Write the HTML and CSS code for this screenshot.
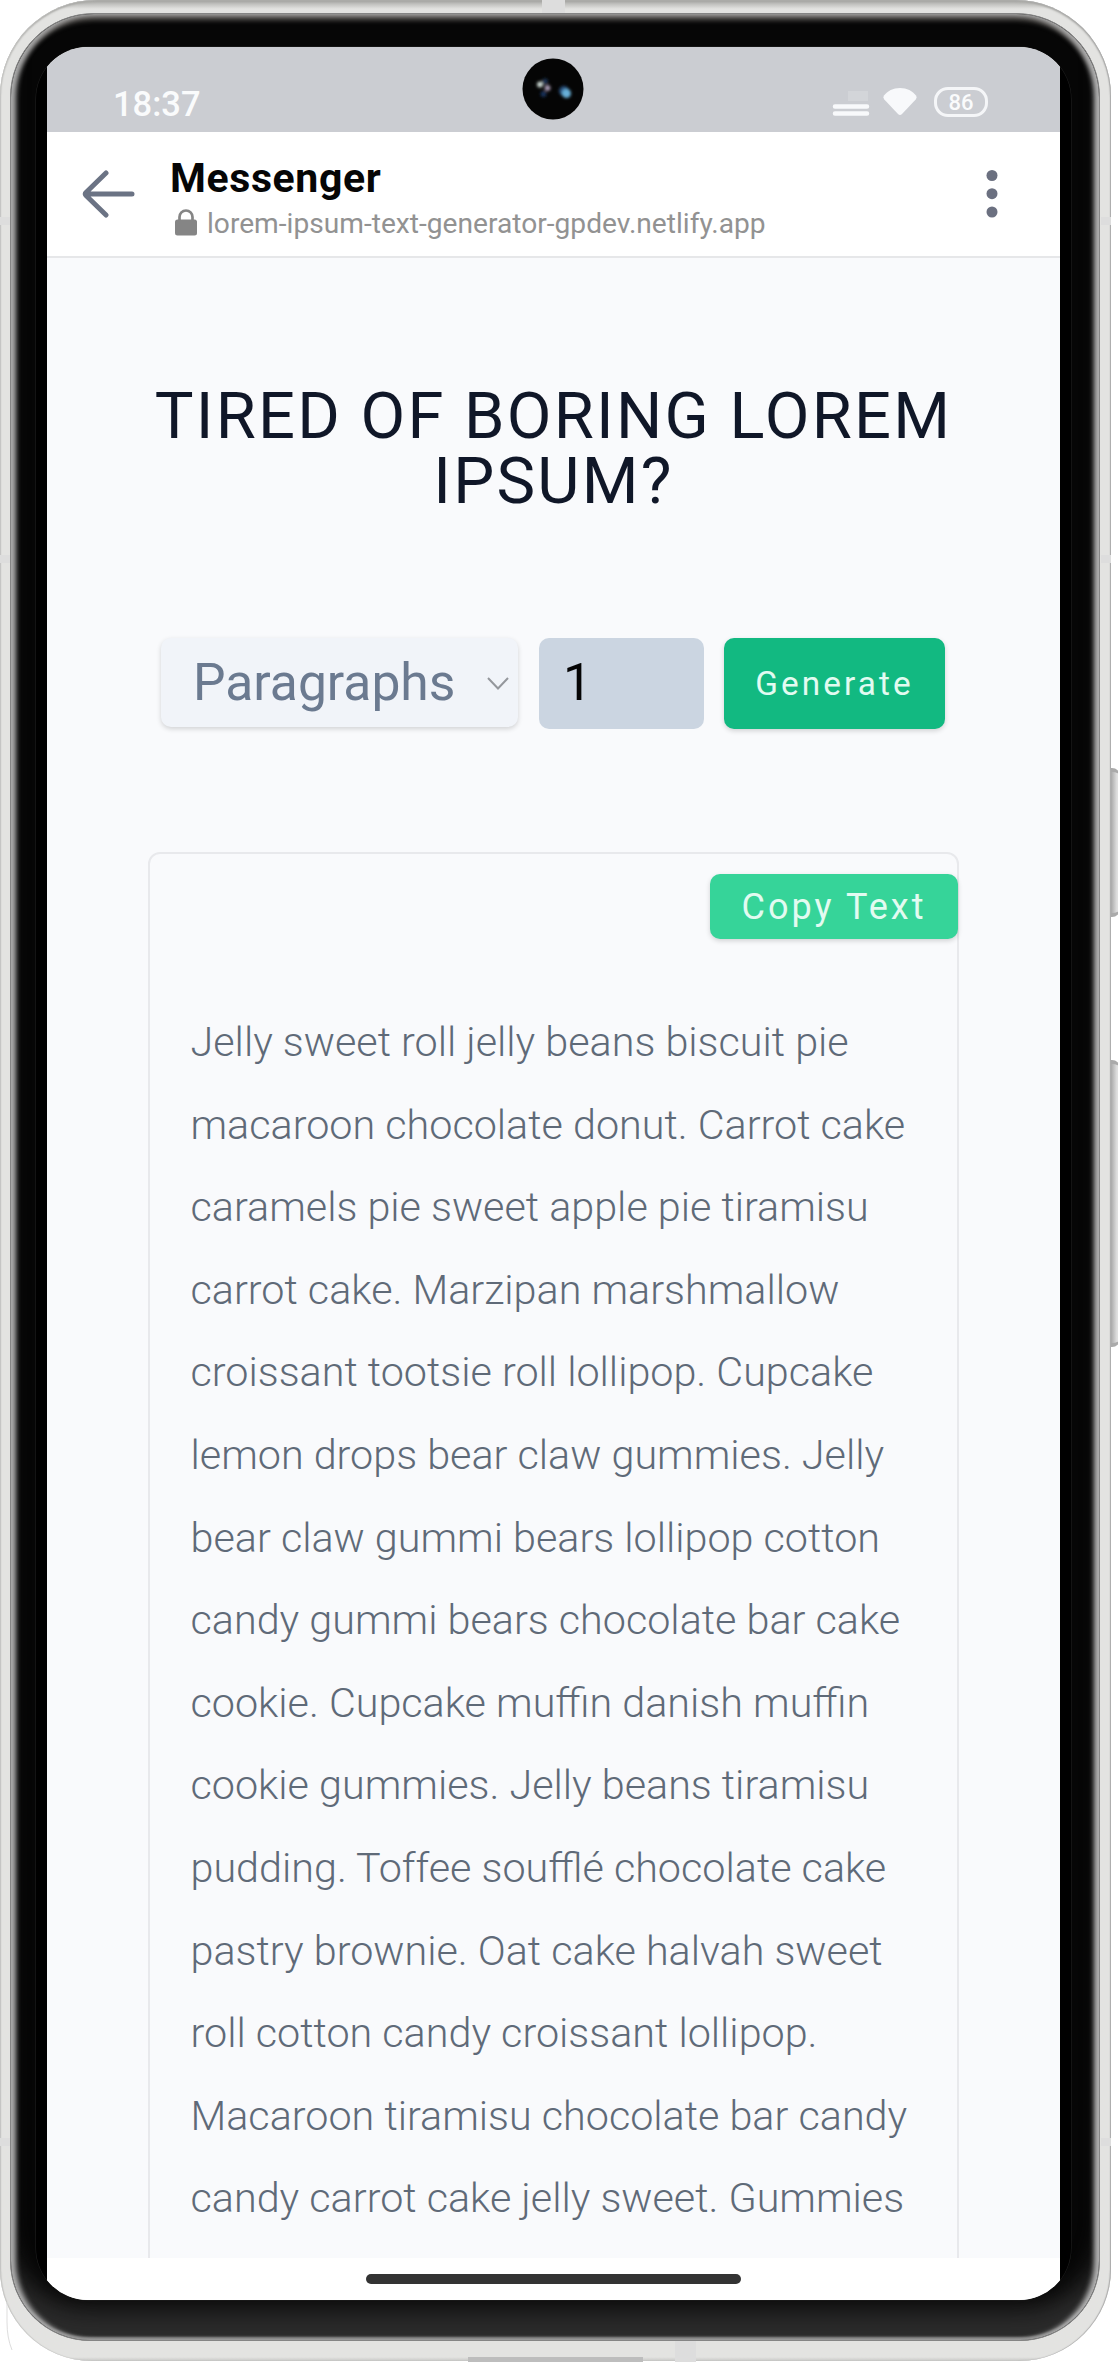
FILE: index.html
```html
<!DOCTYPE html>
<html lang="en">
<head>
<meta charset="utf-8">
<title>Lorem Ipsum Text Generator</title>
<link rel="stylesheet" href="styles.css">
</head>
<body>
<div class="device">
  <div class="phone">
    <div class="bezel">
      <div class="glass">
        <div class="screen">
          <div class="status">
            <span class="time">18:37</span>
            <div class="status-icons">
              <svg class="signal" width="38" height="30" viewBox="0 0 38 30"><path d="M16 4h20v10H16z" fill="#fff" opacity=".16"/><path d="M3 19.500h32M3 26.500h32" stroke="#f8f9fb" stroke-width="4.500" stroke-linecap="round"/></svg>
              <svg class="wifi" width="34" height="30" viewBox="0 0 34 30"><path d="M17 1C10 1 4.500 4 1 8.500Q-.2 10.500 1.300 12.500L15 27Q17 29 19 27L32.700 12.500Q34.200 10.500 33 8.500C29.500 4 24 1 17 1Z" fill="#f8f9fb"/></svg>
              <span class="battery">86</span>
            </div>
          </div>
          <header class="appbar">
            <svg class="back" width="54" height="50" viewBox="0 0 54 50"><path d="M50 25H4M24 4L4 23.500Q2.600 25 4 26.500L24 46" fill="none" stroke="#6b7384" stroke-width="5" stroke-linecap="round" stroke-linejoin="round"/></svg>
            <div class="site">
              <div class="app-name">Messenger</div>
              <div class="url">
                <svg width="24" height="27" viewBox="0 0 24 27"><rect x="1" y="10.500" width="22" height="16" rx="2.500" fill="#858585"/><path d="M5.500 12V8a6.500 6.500 0 0 1 13 0v4" fill="none" stroke="#858585" stroke-width="2.700"/></svg>
                <span>lorem-ipsum-text-generator-gpdev.netlify.app</span>
              </div>
            </div>
            <svg class="more" width="12" height="48" viewBox="0 0 12 48" fill="#6b7080"><circle cx="6" cy="5.500" r="5.500"/><circle cx="6" cy="23.700" r="5.500"/><circle cx="6" cy="42" r="5.500"/></svg>
          </header>
          <main class="page">
            <h1 class="title">TIRED OF BORING LOREM<br>IPSUM?</h1>
            <form class="controls">
              <div class="select"><span>Paragraphs</span>
                <svg width="24" height="15" viewBox="0 0 24 15"><path d="M2 2l10 10.500L22 2" fill="none" stroke="#94979c" stroke-width="2"/></svg>
              </div>
              <div class="count">1</div>
              <button class="generate" type="button">Generate</button>
            </form>
            <section class="card">
              <button class="copy" type="button">Copy Text</button>
              <p class="result">Jelly sweet roll jelly beans biscuit pie<br>macaroon chocolate donut. Carrot cake<br>caramels pie sweet apple pie tiramisu<br>carrot cake. Marzipan marshmallow<br>croissant tootsie roll lollipop. Cupcake<br>lemon drops bear claw gummies. Jelly<br>bear claw gummi bears lollipop cotton<br>candy gummi bears chocolate bar cake<br>cookie. Cupcake muffin danish muffin<br>cookie gummies. Jelly beans tiramisu<br>pudding. Toffee soufflé chocolate cake<br>pastry brownie. Oat cake halvah sweet<br>roll cotton candy croissant lollipop.<br>Macaroon tiramisu chocolate bar candy<br>candy carrot cake jelly sweet. Gummies</p>
            </section>
          </main>
          <div class="nav"><span class="home"></span></div>
        </div>
      </div>
    </div>
  </div>
  <svg class="camera" width="62" height="62" viewBox="0 0 62 62">
    <defs><filter id="soft" x="-1" y="-1" width="3" height="3"><feGaussianBlur stdDeviation="1.500"/></filter></defs>
    <circle cx="31" cy="31" r="30.500" fill="#050505"/>
    <g filter="url(#soft)"><circle cx="18" cy="26.500" r="3" fill="#c9d6d0"/><circle cx="23" cy="23.500" r="3" fill="#1c3252"/><circle cx="25.500" cy="30" r="3" fill="#a597b0"/><circle cx="21.500" cy="36" r="3" fill="#16305a"/><circle cx="42" cy="33" r="5" fill="#28507c"/><circle cx="44.500" cy="35.500" r="4.500" fill="#68b0d8"/></g>
  </svg>
  <i class="band band-top"></i><i class="band band-bottom"></i><i class="port"></i>
  <i class="band side left upper"></i><i class="band side left middle"></i><i class="band side left lower"></i>
  <i class="band side right upper"></i><i class="band side right middle"></i><i class="band side right lower"></i>
  <i class="key power"></i><i class="key volume"></i>
  <svg class="edge" width="8" height="50" viewBox="0 0 8 50"><path d="M1 0V20Q1 36 6 48" fill="none" stroke="#ddd"/></svg>
</div>
</body>
</html>
```
FILE: styles.css
```css
* { box-sizing: border-box; }
body { margin: 0; background: #fff; font-family: Roboto, "Liberation Sans", sans-serif; }
.device { position: relative; width: 1118px; height: 2362px; overflow: hidden; }

/* Metal frame */
.phone {
  width: 1111px; height: 2361px; padding: 13px 11px 20px 10px;
  border-radius: 96px 96px 92px 92px;
  background: linear-gradient(#a5a5a2 0, #e3e3e1 9px, #e3e3e1 2357px, #c8c8c6 2361px);
  box-shadow: inset 1px 0 1px #c4c4c2, inset -1px 0 1px #aaa, inset 0 2px 2px #a9a9a6;
}
.bezel {
  height: 100%; padding: 33px 28px 40px 25px; border-radius: 84px 84px 80px 80px;
  background: #060606;
  border: 1px solid #858585;
  box-shadow: inset 5px 0 5px #aaa, inset -5px 0 5px #b0b0b0, inset 0 6px 5px #5d5a57, inset 0 -3px 2px #6e6e6e, inset 0 -40px 24px -8px #2b2b2b;
}
.glass { height: 2253px; width: 1035px; padding: 0 11px; overflow: hidden; border-radius: 52px; background: #000; box-shadow: 0 0 0 .5px #222; }
.screen { display: flex; flex-direction: column; width: 1013px; height: 2253px; background: #fff; }

/* Status bar */
.status { display: flex; justify-content: space-between; align-items: flex-start; height: 85px; flex: none; padding: 37px 72px 0 66px; background: #cbcdd2; color: #fafbfc; }
.time { font-size: 34.500px; line-height: 40px; font-weight: 500; }
.status-icons { display: flex; align-items: center; padding-top: 3px; }
.signal { margin-right: 13px; }
.wifi { margin-right: 17px; }
.battery { width: 54px; height: 30px; border: 3px solid #f5f6f8; border-radius: 14px; font-size: 22px; line-height: 25px; font-weight: 500; text-align: center; }

/* Browser bar */
.appbar { display: flex; height: 126px; flex: none; border-bottom: 2px solid #e6e7e9; padding: 0 62px 0 34px; }
.back { margin: 37px 34px 0 1px; }
.site { flex: 1; }
.app-name { margin-top: 21px; font-size: 41px; line-height: 50px; font-weight: 700; letter-spacing: .600px; color: #060606; }
.url { display: flex; gap: 9px; align-items: flex-start; padding: 6px 0 0 4px; font-size: 28.150px; line-height: 34px; color: #929292; }
.url span { margin-top: -2px; }
.more { margin-top: 38px; }

/* Page content */
.page { flex: 1; min-height: 0; overflow: hidden; background: #f9fafc; padding: 126px 101px 0; }
.title { margin: 0; font-size: 65px; line-height: 65px; font-weight: 400; letter-spacing: 2.250px; text-align: center; white-space: nowrap; color: #101728; }
.controls { display: flex; margin: 124px 0 0 13px; height: 91px; }
.select { display: flex; align-items: center; justify-content: space-between; width: 357px; height: 89px; margin: 0 21px 0 0; padding: 0 8px 0 32px; border-radius: 10px; background: #f1f4f9; color: #6b7a90; font-size: 51.600px; box-shadow: 0 2px 5px rgba(0,0,0,.16); }
.select svg { margin-top: 2px; }
.count { width: 165px; margin-right: 20px; padding-left: 24px; border-radius: 10px; background: #cbd5e1; color: #050505; font-size: 51.600px; line-height: 90px; }
.generate, .copy { border: 0; padding: 0; border-radius: 10px; color: #e2fbf1; font-family: inherit; white-space: nowrap; }
.generate { width: 221px; background: #12b981; font-size: 33.300px; letter-spacing: 3.100px; box-shadow: 0 2px 5px rgba(0,0,0,.16); }
.card { display: flex; flex-direction: column; margin-top: 123px; width: 811px; height: 1500px; border: 2px solid #e8e9ec; border-radius: 12px; }
.copy { align-self: flex-end; width: 248px; height: 65px; margin: 20px -1px 0 0; background: #36d499; font-size: 36px; letter-spacing: 3.050px; box-shadow: 0 2px 5px rgba(0,0,0,.16); }
.result { margin: 62px 0 0 40.500px; font-size: 41.300px; line-height: 82.600px; font-weight: 300; color: #5f6a78; white-space: nowrap; }
.nav { display: flex; justify-content: center; align-items: flex-start; height: 42px; flex: none; background: #fff; padding-top: 16px; }
.home { width: 375px; height: 10px; border-radius: 5px; background: #333; }

/* Hardware details over the frame */
.camera { position: absolute; left: 522px; top: 58px; }
.band { position: absolute; background: #ddd; }
.band-top { left: 542px; top: 0; width: 23px; height: 13px; }
.band-bottom { left: 675px; bottom: 0; width: 21px; height: 21px; }
.port { position: absolute; left: 468px; bottom: 0; width: 175px; height: 5px; background: #bdbdbd; }
.side { width: 10px; height: 8px; }
.left { left: 0; }
.right { left: 1101px; }
.upper { top: 217px; }
.middle { top: 555px; }
.lower { top: 2138px; }
.key { position: absolute; left: 1111px; width: 9px; border-radius: 0 8px 8px 0; background: linear-gradient(to right, #a8a8a8, #e0e0e0 6px); border: solid #aaa; border-width: 4px 0; }
.power { top: 768px; height: 149px; }
.volume { top: 1060px; height: 287px; }
.edge { position: absolute; left: 6px; top: 2302px; }
```
